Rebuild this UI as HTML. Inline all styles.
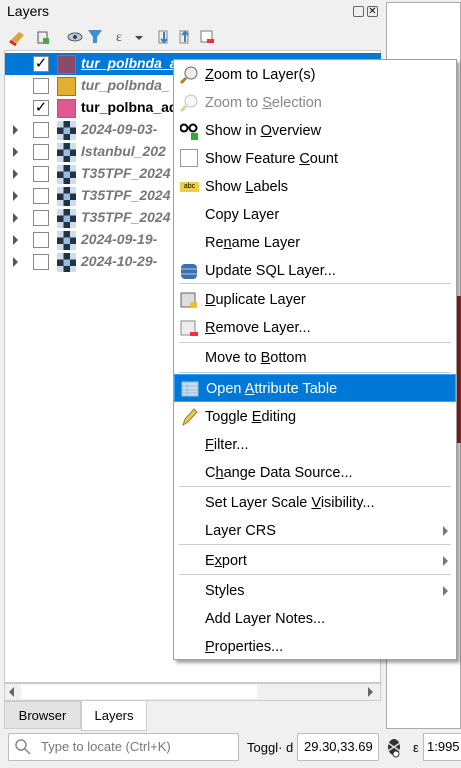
<!DOCTYPE html>
<html><head><meta charset="utf-8"><style>
*{box-sizing:border-box;margin:0;padding:0}
body{width:461px;height:768px;overflow:hidden;background:#f0f0f0;font-family:"Liberation Sans",sans-serif;font-size:14px;color:#000;position:relative}
.abs{position:absolute}
.tree{left:4px;top:50px;width:377px;height:633px;background:#fff;border:1px solid #c8c8c8}
.row{position:absolute;left:0;width:375px;height:22px}
.cb{position:absolute;left:28px;top:3px;width:16px;height:16px;border:1px solid #888;background:#fff;font-size:15px;line-height:14px;text-align:center}
.sw{position:absolute;left:52px;top:2px;width:19px;height:19px;border:1px solid #777}
.rs{position:absolute;left:52px;top:2px;width:19px;height:19px;background:conic-gradient(#234 25%,#9bd 0 50%,#234 0 75%,#cde 0);background-size:13px 13px}
.lbl{position:absolute;left:76px;top:2px;font-weight:bold;font-style:italic;color:#777;font-size:14px;white-space:nowrap}
.arr{position:absolute;left:8px;top:6px;width:0;height:0;border-left:5px solid #555;border-top:5px solid transparent;border-bottom:5px solid transparent}
.menu{left:173px;top:59px;width:284px;height:601px;background:#fff;border:1px solid #a0a0a0;box-shadow:3px 3px 3px rgba(0,0,0,.35)}
.mi{position:absolute;left:0;width:282px;height:28px;line-height:28px;padding-left:31px;white-space:nowrap;font-size:14.5px}
.sep{position:absolute;left:5px;width:272px;height:1px;background:#ccc}
.sub{position:absolute;right:8px;top:9px;border-left:5px solid #777;border-top:5px solid transparent;border-bottom:5px solid transparent}
.ic{position:absolute;left:6px;top:5px;width:18px;height:18px}
</style></head><body>
<div class="abs" style="left:7px;top:3px;font-size:14px">Layers</div>
<div class="abs" style="left:353px;top:6px;width:11px;height:11px;border:1px solid #666;border-radius:2px"></div>
<div class="abs" style="left:367px;top:6px;width:11px;height:11px;border:1px solid #666;border-radius:2px;font-size:10px;line-height:9px;text-align:center">✕</div>
<svg class="abs" style="left:8px;top:26px" width="210" height="22">
<path d="M3 14 L11 6 L16 9 L9 17Z" fill="#e0a040"/><path d="M2 15 l6 4" stroke="#d03030" stroke-width="3"/>
<rect x="30" y="6" width="9" height="11" fill="#eee" stroke="#555"/><rect x="35" y="12" width="6" height="6" fill="#4a4"/>
<ellipse cx="67" cy="11" rx="7" ry="4" fill="#bcd" stroke="#555"/><circle cx="67" cy="11" r="2" fill="#345"/>
<path d="M80 4 h14 l-5 7 v6 h-4 v-6z" fill="#3a90d0"/>
<text x="108" y="15" font-size="14" fill="#555" font-family="Liberation Serif">ε</text><path d="M127 10 h8 l-4 4z" fill="#444"/>
<rect x="151" y="5" width="8" height="12" fill="#eee" stroke="#888"/><path d="M156 6 v10 M153 13 l3 3 3-3" stroke="#3a7fc0" stroke-width="2" fill="none"/>
<rect x="172" y="5" width="8" height="12" fill="#eee" stroke="#888"/><path d="M177 16 v-10 M174 9 l3-3 3 3" stroke="#3a7fc0" stroke-width="2" fill="none"/>
<rect x="193" y="5" width="11" height="11" fill="#fff" stroke="#777"/><rect x="199" y="13" width="7" height="4" fill="#e33"/>
</svg>
<div class="abs tree">
 <div class="row" style="top:2px;background:#0078d7;width:376px"><div class="cb">✓</div><div class="sw" style="background:#8a4a6a"></div><div class="lbl" style="color:#fff;text-decoration:underline">tur_polbnda_a</div></div>
 <div class="row" style="top:24px"><div class="cb"></div><div class="sw" style="background:#e3b030"></div><div class="lbl">tur_polbnda_</div></div>
 <div class="row" style="top:46px"><div class="cb">✓</div><div class="sw" style="background:#e05890"></div><div class="lbl" style="color:#000;font-style:normal">tur_polbna_ad</div></div>
 <div class="row" style="top:68px"><div class="arr"></div><div class="cb"></div><div class="rs"></div><div class="lbl">2024-09-03-</div></div>
 <div class="row" style="top:90px"><div class="arr"></div><div class="cb"></div><div class="rs"></div><div class="lbl">Istanbul_202</div></div>
 <div class="row" style="top:112px"><div class="arr"></div><div class="cb"></div><div class="rs"></div><div class="lbl">T35TPF_2024</div></div>
 <div class="row" style="top:134px"><div class="arr"></div><div class="cb"></div><div class="rs"></div><div class="lbl">T35TPF_2024</div></div>
 <div class="row" style="top:156px"><div class="arr"></div><div class="cb"></div><div class="rs"></div><div class="lbl">T35TPF_2024</div></div>
 <div class="row" style="top:178px"><div class="arr"></div><div class="cb"></div><div class="rs"></div><div class="lbl">2024-09-19-</div></div>
 <div class="row" style="top:200px"><div class="arr"></div><div class="cb"></div><div class="rs"></div><div class="lbl">2024-10-29-</div></div>
</div>
<div class="abs" style="left:386px;top:2px;width:75px;height:727px;background:#fff;border:1px solid #aaa"></div>
<div class="abs" style="left:456px;top:296px;width:5px;height:147px;background:#9a2a20"></div>
<div class="abs" style="left:4px;top:683px;width:377px;height:18px;background:#f0f0f0;border:1px solid #ccc"></div>
<div class="abs" style="left:21px;top:685px;width:236px;height:14px;background:#fff"></div>
<div class="abs" style="left:9px;top:687px;border-right:5px solid #666;border-top:5px solid transparent;border-bottom:5px solid transparent"></div>
<div class="abs" style="left:368px;top:687px;border-left:5px solid #666;border-top:5px solid transparent;border-bottom:5px solid transparent"></div>
<div class="abs" style="left:4px;top:701px;width:77px;height:28px;background:#e4e4e4;border:1px solid #ccc;text-align:center;line-height:28px;font-size:13px">Browser</div>
<div class="abs" style="left:81px;top:701px;width:66px;height:30px;background:#fff;border:1px solid #ccc;border-top:none;text-align:center;line-height:30px;font-size:13px">Layers</div>
<div class="abs" style="left:8px;top:733px;width:231px;height:28px;background:#fff;border:1px solid #bbb;border-radius:2px;color:#777;font-size:13px;line-height:26px;padding-left:32px">Type to locate (Ctrl+K)</div>
<svg class="abs" style="left:14px;top:738px" width="18" height="18"><circle cx="7" cy="7" r="5" fill="none" stroke="#888" stroke-width="1.5"/><path d="M11 11 l5 5" stroke="#888" stroke-width="1.5"/></svg>
<div class="abs" style="left:247px;top:740px;font-size:13px">Toggl&#183; d</div>
<div class="abs" style="left:297px;top:733px;width:82px;height:28px;background:#fff;border:1px solid #bbb;border-radius:2px;font-size:13px;line-height:26px;padding-left:6px">29.30,33.69</div>
<svg class="abs" style="left:384px;top:737px" width="20" height="22"><ellipse cx="10" cy="10" rx="6" ry="8" fill="#333"/><path d="M4 6 l12 8 M16 6 l-12 8" stroke="#ddd" stroke-width="1.5"/><circle cx="12" cy="17" r="3" fill="#fff" stroke="#333"/></svg>
<div class="abs" style="left:413px;top:740px;font-size:13px">ε</div>
<div class="abs" style="left:423px;top:733px;width:40px;height:28px;background:#fff;border:1px solid #bbb;font-size:13px;line-height:26px;padding-left:3px">1:995</div>
<div class="abs menu">
 <div class="mi" style="top:1px"><svg class="ic" viewBox="0 0 18 18"><circle cx="11" cy="7" r="6" fill="#eee" stroke="#666"/><path d="M6 12 l-5 5" stroke="#b08020" stroke-width="3"/></svg><u>Z</u>oom to Layer(s)</div>
 <div class="mi" style="top:29px;color:#888"><svg class="ic" viewBox="0 0 18 18" opacity=".4"><circle cx="11" cy="7" r="6" fill="#eee" stroke="#666"/><path d="M6 12 l-5 5" stroke="#b08020" stroke-width="3"/></svg>Zoom to <u>S</u>election</div>
 <div class="mi" style="top:57px"><svg class="ic" viewBox="0 0 18 18"><circle cx="4" cy="6" r="3.5" fill="none" stroke="#000" stroke-width="2"/><circle cx="13" cy="6" r="3.5" fill="none" stroke="#000" stroke-width="2"/><rect x="11" y="11" width="7" height="7" fill="#3a3"/></svg>Show in <u>O</u>verview</div>
 <div class="mi" style="top:85px"><div class="ic" style="border:1px solid #999;top:4px;width:18px;height:18px"></div>Show Feature <u>C</u>ount</div>
 <div class="mi" style="top:113px"><div class="ic" style="background:#f0d040;height:10px;top:9px;width:19px;font-size:7px;line-height:10px;text-align:center">abc</div>Show <u>L</u>abels</div>
 <div class="mi" style="top:141px">Copy Layer</div>
 <div class="mi" style="top:169px">Re<u>n</u>ame Layer</div>
 <div class="mi" style="top:197px"><svg class="ic" viewBox="0 0 18 18"><rect x="1" y="2" width="16" height="15" rx="4" fill="#3a6fb0"/><path d="M1 7h16M1 12h16" stroke="#bcd"/></svg>Update SQL Layer...</div>
 <div class="sep" style="top:223px"></div>
 <div class="mi" style="top:226px"><svg class="ic" viewBox="0 0 18 18"><rect x="1" y="2" width="14" height="14" fill="#ddd" stroke="#666"/><rect x="10" y="11" width="7" height="6" fill="#e8c040"/></svg><u>D</u>uplicate Layer</div>
 <div class="mi" style="top:254px"><svg class="ic" viewBox="0 0 18 18"><rect x="1" y="2" width="14" height="14" fill="#eee" stroke="#888"/><rect x="10" y="13" width="8" height="4" fill="#e33"/></svg><u>R</u>emove Layer...</div>
 <div class="sep" style="top:282px"></div>
 <div class="mi" style="top:284px">Move to <u>B</u>ottom</div>
 <div class="sep" style="top:312px"></div>
 <div class="mi" style="top:314px;background:#0078d7;color:#fff;border:1px solid #3aa0ff"><svg class="ic" viewBox="0 0 18 18"><rect x="1" y="2" width="16" height="14" fill="#cde" stroke="#9bd"/><path d="M1 6h16M1 10h16M1 13h16M6 2v14" stroke="#9bd"/></svg>Open <u>A</u>ttribute Table</div>
 <div class="mi" style="top:343px"><svg class="ic" viewBox="0 0 18 18"><path d="M3 17 L5 11 L14 1 L17 4 L8 14Z" fill="#e8c850" stroke="#a08030"/></svg>Toggle <u>E</u>diting</div>
 <div class="mi" style="top:371px"><u>F</u>ilter...</div>
 <div class="mi" style="top:399px">C<u>h</u>ange Data Source...</div>
 <div class="sep" style="top:426px"></div>
 <div class="mi" style="top:429px">Set Layer Scale <u>V</u>isibility...</div>
 <div class="mi" style="top:457px">Layer CRS<div class="sub"></div></div>
 <div class="sep" style="top:484px"></div>
 <div class="mi" style="top:487px">E<u>x</u>port<div class="sub"></div></div>
 <div class="sep" style="top:514px"></div>
 <div class="mi" style="top:517px">Styles<div class="sub"></div></div>
 <div class="mi" style="top:545px">Add Layer Notes...</div>
 <div class="mi" style="top:573px"><u>P</u>roperties...</div>
</div>
</body></html>
